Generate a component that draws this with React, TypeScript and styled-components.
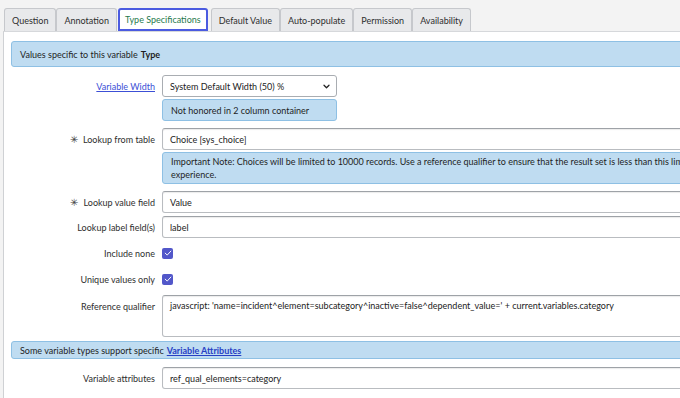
import React from "react";
import styled, { createGlobalStyle } from "styled-components";

const GlobalStyle = createGlobalStyle`
  html, body {
    margin: 0;
    padding: 0;
    background: #f3f3f3;
    overflow: hidden;
    font-family: Lato, "Noto Sans", sans-serif;
    font-size: 9px;
    color: #2e2e2e;
  }
`;

const tabs = [
  "Question",
  "Annotation",
  "Type Specifications",
  "Default Value",
  "Auto-populate",
  "Permission",
  "Availability",
];

const CheckIcon = () => (
  <svg width="8" height="8" viewBox="0 0 10 10" fill="none">
    <path d="M1.5 5.2 L4 7.6 L8.6 2.6" stroke="#ffffff" strokeWidth="1.2" strokeLinecap="round" strokeLinejoin="round" />
  </svg>
);

const Chevron = () => (
  <svg width="7" height="5" viewBox="0 0 8 6" fill="none">
    <path d="M1 1.5 L4 4.5 L7 1.5" stroke="#222" strokeWidth="1.5" strokeLinecap="round" strokeLinejoin="round" />
  </svg>
);

const Field: React.FC<{ label: React.ReactNode; required?: boolean; children: React.ReactNode; top?: number }> = ({
  label,
  required,
  children,
  top = 0,
}) => (
  <Row $top={top}>
    <Label>
      {required && <Star>✳</Star>}
      {label}
    </Label>
    <Control>{children}</Control>
  </Row>
);

export default function App() {
  return (
    <>
      <GlobalStyle />
      <Page>
        <TabBar>
          {tabs.map((t) => (
            <Tab key={t} $active={t === "Type Specifications"}>
              {t}
            </Tab>
          ))}
        </TabBar>
        <Panel>
          <Banner $tall>
            Values specific to this variable <b>Type</b>
          </Banner>

          <Field label={<LabelLink>Variable Width</LabelLink>} top={8}>
            <Select>
              <span>System Default Width (50) %</span>
              <Chevron />
            </Select>
            <Note $width={175}>Not honored in 2 column container</Note>
          </Field>

          <Field label="Lookup from table" required top={7}>
            <Input>Choice [sys_choice]</Input>
            <Note>
              Important Note: Choices will be limited to 10000 records. Use a reference qualifier to ensure that the result set is less than this limit for a better
              <br />
              experience.
            </Note>
          </Field>

          <Field label="Lookup value field" required top={7}>
            <Input>Value</Input>
          </Field>

          <Field label="Lookup label field(s)" top={3}>
            <Input>label</Input>
          </Field>

          <CheckRow>
            <Label>Include none</Label>
            <Checkbox>
              <CheckIcon />
            </Checkbox>
          </CheckRow>

          <CheckRow>
            <Label>Unique values only</Label>
            <Checkbox>
              <CheckIcon />
            </Checkbox>
          </CheckRow>

          <Field label="Reference qualifier" top={5}>
            <TextArea>
              javascript: 'name=incident^element=subcategory^inactive=false^dependent_value=' + current.variables.category
            </TextArea>
          </Field>

          <Banner>
            Some variable types support specific <BannerLink>Variable Attributes</BannerLink>
          </Banner>

          <Field label="Variable attributes" top={8}>
            <Input>ref_qual_elements=category</Input>
          </Field>
        </Panel>
      </Page>
    </>
  );
}

const Page = styled.div`
  width: 780px;
  padding-top: 8px;
`;

const TabBar = styled.div`
  display: flex;
  align-items: flex-end;
  padding-left: 4px;
  height: 23px;
`;

const Tab = styled.div<{ $active?: boolean }>`
  box-sizing: border-box;
  height: 23px;
  padding: 0 ${({ $active }) => ($active ? "5px" : "7px")};
  display: flex;
  align-items: center;
  font-size: 9px;
  border-radius: 3px 3px 0 0;
  background: ${({ $active }) => ($active ? "#ffffff" : "#e8e9eb")};
  color: ${({ $active }) => ($active ? "#1f7a4e" : "#2e2e2e")};
  border: ${({ $active }) => ($active ? "2px solid #4b5be0" : "1px solid #c6c8cc")};
  border-bottom: ${({ $active }) => ($active ? "2px solid #4b5be0" : "none")};
  margin: ${({ $active }) => ($active ? "0 3px 0 1px" : "0")};
`;

const Panel = styled.div`
  background: #ffffff;
  border-left: 1px solid #cfd1d4;
  border-top: 1px solid #d6d8db;
  margin-left: 3px;
  padding: 9px 0 12px 7px;
  min-height: 380px;
`;

const Banner = styled.div<{ $tall?: boolean }>`
  box-sizing: border-box;
  height: ${({ $tall }) => ($tall ? "26px" : "18px")};
  display: flex;
  align-items: center;
  gap: 3px;
  padding-left: 8px;
  margin-top: ${({ $tall }) => ($tall ? "0" : "4px")};
  background: #bfdcf1;
  border: 1px solid #8ec0e4;
  border-radius: 3px;
  color: #1e1e1e;

  b {
    font-weight: 700;
  }
`;

const BannerLink = styled.a`
  color: #2740c4;
  font-weight: 700;
  text-decoration: underline;
`;

const Row = styled.div<{ $top: number }>`
  display: grid;
  grid-template-columns: 144px 1fr;
  column-gap: 7px;
  align-items: start;
  margin-top: ${({ $top }) => $top}px;
`;

const CheckRow = styled.div`
  display: grid;
  grid-template-columns: 144px 1fr;
  column-gap: 7px;
  align-items: center;
  height: 22px;
  margin-top: 4px;
`;

const Label = styled.div`
  display: flex;
  justify-content: flex-end;
  align-items: center;
  gap: 5px;
  height: 22px;
  color: #2e2e2e;
  white-space: nowrap;
`;

const LabelLink = styled.a`
  color: #3c4fd6;
  text-decoration: underline;
`;

const Star = styled.span`
  font-size: 10px;
  color: #444;
`;

const Control = styled.div`
  display: flex;
  flex-direction: column;
  gap: 2px;
`;

const Input = styled.div`
  box-sizing: border-box;
  height: 22px;
  display: flex;
  align-items: center;
  padding: 0 7px;
  background: #ffffff;
  border: 1px solid #b9bcc0;
  border-top-color: #9ea2a7;
  border-radius: 3px;
  box-shadow: inset 0 1px 1px rgba(0, 0, 0, 0.08);
  color: #222;
  white-space: nowrap;
`;

const TextArea = styled(Input)`
  height: 42px;
  align-items: flex-start;
  padding-top: 4px;
`;

const Select = styled.div`
  box-sizing: border-box;
  width: 175px;
  height: 22px;
  display: flex;
  align-items: center;
  justify-content: space-between;
  padding: 0 6px 0 7px;
  background: #ffffff;
  border: 1px solid #a9adb2;
  border-radius: 3px;
  color: #222;
`;

const Note = styled.div<{ $width?: number }>`
  box-sizing: border-box;
  width: ${({ $width }) => ($width ? `${$width}px` : "auto")};
  min-height: 22px;
  display: flex;
  align-items: center;
  padding: 2px 8px;
  line-height: 13px;
  background: #bfdcf1;
  border: 1px solid #8ec0e4;
  border-radius: 3px;
  color: #1e1e1e;
  white-space: nowrap;
  overflow: hidden;
`;

const Checkbox = styled.div`
  width: 11px;
  height: 11px;
  border-radius: 2px;
  background: #5257c9;
  display: flex;
  align-items: center;
  justify-content: center;
`;
